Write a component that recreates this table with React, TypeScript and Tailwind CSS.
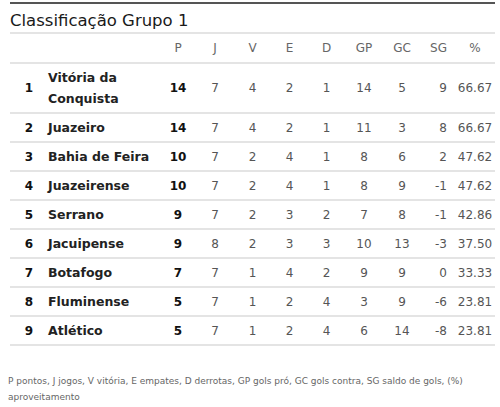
const rows = [
  { pos: 1, team: "Vitória da Conquista", p: 14, j: 7, v: 4, e: 2, d: 1, gp: 14, gc: 5, sg: 9, pct: "66.67" },
  { pos: 2, team: "Juazeiro", p: 14, j: 7, v: 4, e: 2, d: 1, gp: 11, gc: 3, sg: 8, pct: "66.67" },
  { pos: 3, team: "Bahia de Feira", p: 10, j: 7, v: 2, e: 4, d: 1, gp: 8, gc: 6, sg: 2, pct: "47.62" },
  { pos: 4, team: "Juazeirense", p: 10, j: 7, v: 2, e: 4, d: 1, gp: 8, gc: 9, sg: -1, pct: "47.62" },
  { pos: 5, team: "Serrano", p: 9, j: 7, v: 2, e: 3, d: 2, gp: 7, gc: 8, sg: -1, pct: "42.86" },
  { pos: 6, team: "Jacuipense", p: 9, j: 8, v: 2, e: 3, d: 3, gp: 10, gc: 13, sg: -3, pct: "37.50" },
  { pos: 7, team: "Botafogo", p: 7, j: 7, v: 1, e: 4, d: 2, gp: 9, gc: 9, sg: 0, pct: "33.33" },
  { pos: 8, team: "Fluminense", p: 5, j: 7, v: 1, e: 2, d: 4, gp: 3, gc: 9, sg: -6, pct: "23.81" },
  { pos: 9, team: "Atlético", p: 5, j: 7, v: 1, e: 2, d: 4, gp: 6, gc: 14, sg: -8, pct: "23.81" },
];

const font = { fontFamily: "'DejaVu Sans', Verdana, sans-serif" };

export default function App() {
  return (
    <div className="w-[500px] h-[407px] bg-white" style={font}>
      <div className="ml-[10px] w-[485px] pt-[2px]">
        <div className="border-t-2 border-[#555]" />
        <h2 className="h-[30px] pt-[7px] text-[16.5px] leading-[20px] text-[#1a1a1a] border-b-2 border-[#e4e4e4]">
          Classificação Grupo 1
        </h2>
        <table className="w-full table-fixed border-collapse text-[12px] text-[#555]">
          <colgroup>
            <col className="w-[38px]" />
            <col className="w-[112px]" />
            <col className="w-[36px]" />
            <col className="w-[38px]" />
            <col className="w-[37px]" />
            <col className="w-[37px]" />
            <col className="w-[37px]" />
            <col className="w-[38px]" />
            <col className="w-[38px]" />
            <col className="w-[34px]" />
            <col className="w-[40px]" />
          </colgroup>
          <thead>
            <tr className="h-[29px] border-b-2 border-[#e4e4e4] text-[#666]">
              <th />
              <th />
              {["P", "J", "V", "E", "D", "GP", "GC"].map((h) => (
                <th key={h} className="font-normal text-center">{h}</th>
              ))}
              <th className="font-normal text-right pr-[8px]">SG</th>
              <th className="font-normal text-center">%</th>
            </tr>
          </thead>
          <tbody>
            {rows.map((r) => (
              <tr
                key={r.pos}
                className={`${r.pos === 1 ? "h-[50px]" : "h-[29px]"} border-b-2 border-[#e4e4e4]`}
              >
                <td className="text-center font-bold text-[#111]">{r.pos}</td>
                <td className="font-bold text-[#222] text-[12.5px] leading-[21px]">{r.team}</td>
                <td className="text-center font-bold text-[#111]">{r.p}</td>
                <td className="text-center">{r.j}</td>
                <td className="text-center">{r.v}</td>
                <td className="text-center">{r.e}</td>
                <td className="text-center">{r.d}</td>
                <td className="text-center">{r.gp}</td>
                <td className="text-center">{r.gc}</td>
                <td className="text-right pr-[8px]">{r.sg}</td>
                <td className="text-center">{r.pct}</td>
              </tr>
            ))}
          </tbody>
        </table>
      </div>
      <p className="mt-[27px] ml-[8px] w-[460px] text-[9px] leading-[16px] text-[#666]">
        P pontos, J jogos, V vitória, E empates, D derrotas, GP gols pró, GC gols contra, SG saldo de gols, (%) aproveitamento
      </p>
    </div>
  );
}
